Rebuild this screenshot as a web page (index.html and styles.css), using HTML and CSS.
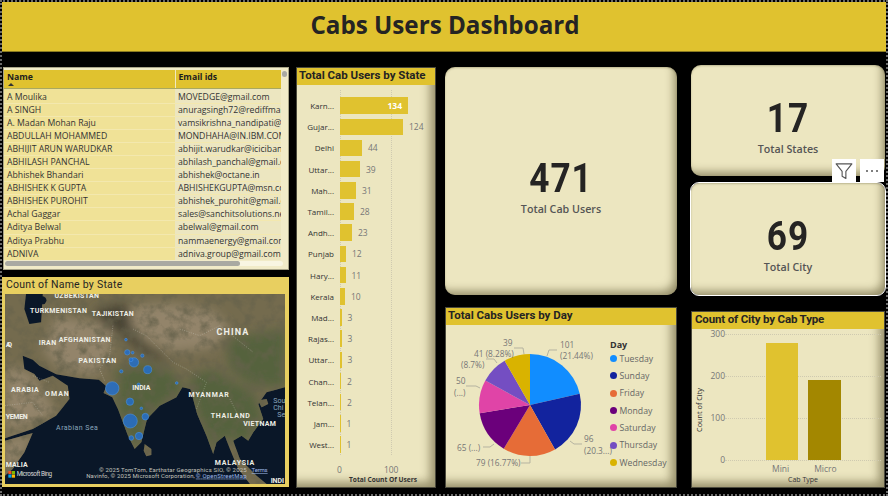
FILE: index.html
```html
<!DOCTYPE html>
<html lang="en">
<head>
<meta charset="utf-8">
<title>Cabs Users Dashboard</title>
<link rel="stylesheet" href="styles.css">
</head>
<body>
<div class="page">
  <header class="banner"><h1>Cabs Users Dashboard</h1></header>
  <main class="board">
    <section class="col col-one">
      <div class="table-card">
        <div class="table-clip">
          <table class="people">
            <thead><tr><th><span>Name</span><i class="sort"></i></th><th><span>Email ids</span></th></tr></thead>
            <tbody>
              <tr><td>A Moulika</td><td>MOVEDGE@gmail.com</td></tr>
              <tr><td>A SINGH</td><td>anuragsingh72@rediffmail.com</td></tr>
              <tr><td>A. Madan Mohan Raju</td><td>vamsikrishna_nandipati@yahoo.com</td></tr>
              <tr><td>ABDULLAH MOHAMMED</td><td>MONDHAHA@IN.IBM.COM</td></tr>
              <tr><td>ABHIJIT ARUN WARUDKAR</td><td>abhijit.warudkar@icicibank.com</td></tr>
              <tr><td>ABHILASH PANCHAL</td><td>abhilash_panchal@gmail.com</td></tr>
              <tr><td>Abhishek Bhandari</td><td>abhishek@octane.in</td></tr>
              <tr><td>ABHISHEK K GUPTA</td><td>ABHISHEKGUPTA@msn.com</td></tr>
              <tr><td>ABHISHEK PUROHIT</td><td>abhishek_purohit@gmail.com</td></tr>
              <tr><td>Achal Gaggar</td><td>sales@sanchitsolutions.net</td></tr>
              <tr><td>Aditya Belwal</td><td>abelwal@gmail.com</td></tr>
              <tr><td>Aditya Prabhu</td><td>nammaenergy@gmail.com</td></tr>
              <tr><td>ADNIVA</td><td>adniva.group@gmail.com</td></tr>
            </tbody>
          </table>
          <div class="vscroll"></div>
        </div>
        <div class="hscroll"><div class="hthumb"></div></div>
      </div>
      <div class="map-card">
        <h2 class="map-title">Count of Name by State</h2>
        <svg class="map" viewBox="17 65 838 570" preserveAspectRatio="none" role="img" aria-label="Bubble map of India">
          <defs>
            <filter id="softer" x="-30%" y="-30%" width="160%" height="160%"><feGaussianBlur stdDeviation="16"/></filter>
            <filter id="grain" x="0" y="0" width="100%" height="100%">
              <feTurbulence type="fractalNoise" baseFrequency="0.03" numOctaves="5" seed="7"/>
              <feColorMatrix type="matrix" values="0 0 0 0 .13  0 0 0 0 .12  0 0 0 0 .07  2 0 0 0 -.85"/>
            </filter>
            <clipPath id="landclip">
              <path d="M17 65H855V345L800 360 775 395 790 440 760 480 745 505 725 490 700 505 720 560 770 610 800 635H750L715 590 690 530 675 490 650 510 640 545 620 490 592 425 572 350 548 345 530 375 480 400 442 440 425 510 405 530 385 490 355 410 338 375 312 362 320 342 298 322 240 318 170 306 120 280 100 262 70 250 75 290 105 305 120 325 160 310 205 340 210 380 170 430 100 470 17 498Z"/>
              <path d="M17 505 100 482 75 540 40 590 17 610Z"/>
              <path d="M435 515 455 530 455 548 440 552 432 535Z"/>
              <path d="M775 385 800 380 805 395 785 405Z"/>
            </clipPath>
          </defs>
          <rect x="17" y="65" width="838" height="570" class="sea"/>
          <g clip-path="url(#landclip)">
            <rect x="17" y="65" width="838" height="570" class="land"/>
            <g filter="url(#softer)">
              <path class="land-green" d="M340 300 420 270 520 300 550 345 530 375 480 400 442 440 425 510 405 530 385 490 355 410 345 375 365 340Z"/>
              <path class="land-green" d="M570 310 640 290 700 330 760 360 790 440 745 505 700 505 675 490 640 545 620 490 592 425 572 350Z"/>
              <path class="land-green" d="M680 200 855 170 855 345 760 340 690 290Z"/>
              <path class="land-pale" d="M400 100 520 95 640 115 690 170 640 225 520 240 440 200 385 160Z"/>
              <path class="land-pale" d="M170 130 340 160 330 250 290 310 180 290 130 230Z"/>
              <path class="land-pale" d="M17 280 90 300 120 340 170 420 90 460 17 470Z"/>
              <path class="land-pale" d="M17 505 100 482 75 540 40 590 17 610Z"/>
              <path class="land-dark" d="M285 110 380 90 400 170 440 220 520 270 440 255 370 190 310 160Z"/>
            </g>
            <rect x="17" y="65" width="838" height="570" filter="url(#grain)"/>
          </g>
          <path class="sea" d="M80 65H130L125 150 90 155 75 110Z"/>
          <ellipse class="sea" cx="128" cy="84" rx="13" ry="12"/>
          <path class="borders" d="M340 160 330 250 300 290 315 325M400 170 440 190 520 270 560 290M560 290 620 330 590 410M540 170 600 190 660 160 760 240M690 380 720 440M100 310 150 330M17 400 100 390 130 430"/>
          <g class="bubbles">
            <circle cx="338" cy="348" r="20"/><circle cx="392" cy="446" r="21"/><circle cx="403" cy="270" r="14"/>
            <circle cx="444" cy="292" r="12"/><circle cx="391" cy="388" r="11"/><circle cx="437" cy="433" r="10"/>
            <circle cx="418" cy="491" r="11"/><circle cx="395" cy="497" r="7"/><circle cx="383" cy="240" r="8"/>
            <circle cx="394" cy="262" r="6"/><circle cx="399" cy="241" r="4"/><circle cx="428" cy="250" r="5"/>
            <circle cx="379" cy="202" r="4"/><circle cx="365" cy="297" r="5"/><circle cx="417" cy="337" r="5"/>
            <circle cx="425" cy="408" r="4"/><circle cx="531" cy="332" r="4"/>
          </g>
          <g class="map-labels">
            <text x="165" y="77" textLength="133">UZBEKISTAN</text>
            <text x="92" y="122" textLength="170">TURKMENISTAN</text>
            <text x="277" y="130" textLength="125">TAJIKISTAN</text>
            <text class="big" x="650" y="188" textLength="95">CHINA</text>
            <text x="118" y="217" textLength="52">IRAN</text>
            <text x="178" y="210" textLength="155">AFGHANISTAN</text>
            <text x="237" y="271" textLength="113">PAKISTAN</text>
            <text x="398" y="352" textLength="54">INDIA</text>
            <text x="35" y="358" textLength="83">ARABIA</text>
            <text x="137" y="371" textLength="71">OMAN</text>
            <text x="566" y="373" textLength="121">MYANMAR</text>
            <text x="633" y="436" textLength="117">THAILAND</text>
            <text x="730" y="461" textLength="98">VIETNAM</text>
            <text x="19" y="439" textLength="66">YEMEN</text>
            <text x="645" y="578" textLength="118">MALAYSIA</text>
            <text x="19" y="585" textLength="66">MALIA</text>
            <text x="19" y="224" textLength="19">AQ</text>
            <text x="812" y="632" textLength="40">INDI</text>
            <text class="water" x="170" y="472" textLength="125">Arabian Sea</text>
            <text class="water" x="820" y="392">Sou</text>
            <text class="water" x="820" y="413">Chi</text>
            <text class="water" x="832" y="434">Se</text>
          </g>
          <g>
            <rect x="27" y="596" width="9.500" height="9.500" fill="#f25022"/><rect x="37.500" y="596" width="9.500" height="9.500" fill="#7fba00"/>
            <rect x="27" y="606.500" width="9.500" height="9.500" fill="#00a4ef"/><rect x="37.500" y="606.500" width="9.500" height="9.500" fill="#ffb900"/>
            <text class="bing" x="52" y="611" textLength="106">Microsoft Bing</text>
          </g>
          <text class="credit" x="298" y="599" textLength="442">© 2025 TomTom, Earthstar Geographics SIO, © 2025</text>
          <text class="credit link" x="755" y="599" textLength="48">Terms</text>
          <text class="credit" x="260" y="616" textLength="325">Navinfo, © 2025 Microsoft Corporation,</text>
          <text class="credit link" x="588" y="616" textLength="152">© OpenStreetMap</text>
        </svg>
      </div>
    </section>

    <section class="col col-two">
      <div class="panel state-panel">
        <h2 class="panel-title">Total Cab Users by State</h2>
        <div class="hbars">
          <i class="gridline grid-zero"></i><i class="gridline grid-hundred"></i>
          <div class="hrow"><span class="hlabel">Karn...</span><span class="hbar" style="width:68px"><b class="inside">134</b></span></div>
          <div class="hrow"><span class="hlabel">Gujar...</span><span class="hbar" style="width:63px"></span><em>124</em></div>
          <div class="hrow"><span class="hlabel">Delhi</span><span class="hbar" style="width:22px"></span><em>44</em></div>
          <div class="hrow"><span class="hlabel">Uttar...</span><span class="hbar" style="width:20px"></span><em>39</em></div>
          <div class="hrow"><span class="hlabel">Mah...</span><span class="hbar" style="width:16px"></span><em>31</em></div>
          <div class="hrow"><span class="hlabel">Tamil...</span><span class="hbar" style="width:14px"></span><em>28</em></div>
          <div class="hrow"><span class="hlabel">Andh...</span><span class="hbar" style="width:12px"></span><em>23</em></div>
          <div class="hrow"><span class="hlabel">Punjab</span><span class="hbar" style="width:6px"></span><em>12</em></div>
          <div class="hrow"><span class="hlabel">Hary...</span><span class="hbar" style="width:5.500px"></span><em>11</em></div>
          <div class="hrow"><span class="hlabel">Kerala</span><span class="hbar" style="width:5px"></span><em>10</em></div>
          <div class="hrow"><span class="hlabel">Mad...</span><span class="hbar" style="width:1.500px"></span><em>3</em></div>
          <div class="hrow"><span class="hlabel">Rajas...</span><span class="hbar" style="width:1.500px"></span><em>3</em></div>
          <div class="hrow"><span class="hlabel">Uttar...</span><span class="hbar" style="width:1.500px"></span><em>3</em></div>
          <div class="hrow"><span class="hlabel">Chan...</span><span class="hbar" style="width:1px"></span><em>2</em></div>
          <div class="hrow"><span class="hlabel">Telan...</span><span class="hbar" style="width:1px"></span><em>2</em></div>
          <div class="hrow"><span class="hlabel">Jam...</span><span class="hbar" style="width:.5px"></span><em>1</em></div>
          <div class="hrow"><span class="hlabel">West...</span><span class="hbar" style="width:.5px"></span><em>1</em></div>
        </div>
        <div class="haxis"><span>0</span><span>100</span></div>
        <div class="haxis-title">Total Count Of Users</div>
      </div>
    </section>

    <section class="col col-three">
      <div class="kpi kpi-main"><strong>471</strong><span>Total Cab Users</span></div>
      <div class="panel pie-panel">
        <h2 class="panel-title">Total Cabs Users by Day</h2>
        <div class="pie-body">
          <svg class="pie" viewBox="445 324 163 164" role="img" aria-label="Pie chart of cab users by day">
            <g transform="translate(529 404)">
              <path fill="#118dff" d="M0 0V-51A51 51 0 0 1 49.730-11.300Z"/>
              <path fill="#12239e" d="M0 0 49.730-11.300A51 51 0 0 1 25.070 44.410Z"/>
              <path fill="#e66c37" d="M0 0 25.070 44.410A51 51 0 0 1-26.230 43.730Z"/>
              <path fill="#6b007b" d="M0 0-26.230 43.730A51 51 0 0 1-50.320 8.290Z"/>
              <path fill="#e044a7" d="M0 0-50.320 8.290A51 51 0 0 1-44.670-24.610Z"/>
              <path fill="#744ec2" d="M0 0-44.670-24.610A51 51 0 0 1-25.350-44.250Z"/>
              <path fill="#d9b300" d="M0 0-25.350-44.250A51 51 0 0 1 0-51Z"/>
            </g>
            <g class="leaders">
              <polyline points="546,355 548,349 556,349"/><polyline points="569,440 573,443 581,443"/>
              <polyline points="529,455 529,462 520,462"/><polyline points="493,443 489,446 482,446"/>
              <polyline points="479,387 475,385 465,385"/><polyline points="496,362 493,358 485,358"/>
              <polyline points="523,353 522,347 513,347"/>
            </g>
            <g class="pie-labels">
              <text x="559" y="347">101</text><text x="559" y="358">(21.44%)</text>
              <text x="583" y="441">96</text><text x="583" y="453">(20.3...)</text>
              <text x="475" y="465">79 (16.77%)</text>
              <text x="456" y="450">65 (...)</text>
              <text x="455" y="383">50</text><text x="453" y="395">(...)</text>
              <text x="473" y="356">41 (8.28%)</text><text x="460" y="367">(8.7%)</text>
              <text x="502" y="345">39</text>
            </g>
          </svg>
          <div class="legend">
            <div class="legend-title">Day</div>
            <div class="legend-item"><i class="dot c1"></i>Tuesday</div>
            <div class="legend-item"><i class="dot c2"></i>Sunday</div>
            <div class="legend-item"><i class="dot c3"></i>Friday</div>
            <div class="legend-item"><i class="dot c4"></i>Monday</div>
            <div class="legend-item"><i class="dot c5"></i>Saturday</div>
            <div class="legend-item"><i class="dot c6"></i>Thursday</div>
            <div class="legend-item"><i class="dot c7"></i>Wednesday</div>
          </div>
        </div>
      </div>
    </section>

    <section class="col col-four">
      <div class="kpi kpi-small"><strong>17</strong><span>Total States</span></div>
      <div class="kpi kpi-small kpi-focus"><strong>69</strong><span>Total City</span></div>
      <div class="tools">
        <div class="tool">
          <svg viewBox="0 0 24 24" width="18" height="18"><path class="funnel" d="M1.500 2.500H22.500L14.500 12.500V22L9.500 19V12.500Z"/></svg>
        </div>
        <div class="tool"><i></i><i></i><i></i></div>
      </div>
      <div class="panel cab-panel">
        <h2 class="panel-title">Count of City by Cab Type</h2>
        <div class="vchart">
          <div class="ytitle"><span>Count of City</span></div>
          <div class="yticks"><span>300</span><span>200</span><span>100</span><span>0</span></div>
          <div class="plot">
            <i class="hline l300"></i><i class="hline l200"></i><i class="hline l100"></i><i class="hline l0"></i>
            <div class="vbar mini"></div>
            <div class="vbar micro"></div>
          </div>
        </div>
        <div class="xticks"><span>Mini</span><span>Micro</span></div>
        <div class="xtitle">Cab Type</div>
      </div>
    </section>
  </main>
</div>
</body>
</html>
```

FILE: styles.css
```css
* { box-sizing: border-box; }
html, body { margin: 0; padding: 0; background: #000; }
.page {
  width: 888px; height: 496px; overflow: hidden; background: #000;
  border: 2px dotted #6a6a6a;
  font-family: "Open Sans", "Noto Sans", sans-serif;
}
.banner {
  height: 50px; background: #e0c22f; border-bottom: 1px solid #8a7a20;
  display: flex; align-items: center; justify-content: center;
  margin-right: -2px;
}
.banner h1 { margin: 0 0 4px; font: 700 24.200px "Open Sans", sans-serif; color: #252423; }
.board { display: flex; align-items: flex-start; padding-top: 13px; }
.col { display: flex; flex-direction: column; }
.col-one { width: 286px; margin-left: 1px; padding-top: 2px; gap: 7px; }
.col-two { width: 140px; margin-left: 7px; padding-top: 2px; }
.col-three { width: 232px; margin-left: 9px; padding-top: 2px; gap: 12px; }
.col-four { width: 194px; margin-left: 14px; position: relative; }

/* table */
.table-card {
  height: 203px; background: #f1ebc8; border: 1px solid #a8a488;
  padding: 2px 1px 0 0; display: flex; flex-direction: column;
}
.table-clip { position: relative; height: 190px; width: 283px; padding-right: 5px; overflow: hidden; }
.people { border-collapse: collapse; table-layout: fixed; width: 277px; font-size: 8.700px; color: #333; }
.people th {
  height: 18px; background: #e0c22f; color: #1d1d1d; font-size: 8.700px; font-weight: 700;
  text-align: left; vertical-align: top; padding: 1px 0 0 3px; border-right: 1px solid #f0e9c0;
  border-bottom: 1px solid #a9a860; position: relative; line-height: 12px;
}
.people th:first-child { width: 171px; }
.people th:last-child { border-right: 0; }
.sort {
  position: absolute; left: 4px; top: 13px; width: 0; height: 0;
  border: 3px solid transparent; border-top: 0; border-bottom: 3px solid #333;
}
.people td {
  height: 13.100px; padding: 0 0 0 3px; white-space: nowrap; overflow: hidden;
  line-height: 12px; border-bottom: 1px solid #f3e8ae;
}
.people tbody tr:first-child td { height: 15.100px; padding-top: 2px; }
.people td:first-child { background: #f0e297; }
.people td:last-child { background: #ece6c0; }
.vscroll { position: absolute; right: 0; top: 1px; width: 5px; height: 6px; background: #a9a9a2; border-radius: 3px; }
.hscroll { height: 5px; width: 278px; margin: 1px 0 0 1px; background: #f8f5e2; border-radius: 3px; }
.hthumb { height: 5px; width: 235px; background: #a9a9a2; border-radius: 3px; }

/* map */
.map-card {
  height: 210px; background: #e8cf60; padding: 0 3px 3px 3px; margin-left: -1px;
  display: flex; flex-direction: column;
}
.map-title { margin: 0; height: 17px; font: 400 10.500px/15px "Roboto", sans-serif; letter-spacing: .25px; color: #252423; padding-left: 1px; }
.map { width: 280px; height: 190px; display: block; }
.sea { fill: #0a1728; }
.land { fill: #746b4e; }
.land-green { fill: #55623c; }
.land-pale { fill: #93846a; }
.land-dark { fill: #4a4534; }
.borders { fill: none; stroke: #cfcfc4; stroke-width: 2; stroke-dasharray: 3 4; opacity: .55; }
.bubbles circle { fill: #1f6fd2; fill-opacity: .8; stroke: #4d98e8; stroke-width: 1.500; }
.map-labels text { font: 700 21px "Roboto", sans-serif; fill: #eeeee6; }
.map-labels .big { font-size: 27px; }
.map-labels .water { fill: #8ba7bd; font-weight: 400; }
.bing { font: 400 19px "Roboto", sans-serif; fill: #d8d8d8; }
.credit { font: 400 18px "Roboto", sans-serif; fill: #c4c4bc; }
.credit.link { fill: #9db8e8; text-decoration: underline; }

/* shared panels */
.panel {
  background: #ece6c0; border: 1px solid #4b4a3d; display: flex; flex-direction: column; position: relative;
  box-shadow: inset -8px -8px 10px -3px rgba(70, 62, 25, .5);
}
.panel-title {
  margin: 0; height: 17px; background: #e0c22f; color: #252423; flex: none;
  font: 700 11.500px/15px "Roboto", sans-serif; padding-left: 2px;
}
.cab-panel .panel-title { padding-left: 3px; letter-spacing: -.16px; }

/* state bars */
.state-panel { height: 421px; }
.hbars { position: relative; padding-top: 10px; height: 372px; display: flex; flex-direction: column; }
.hrow { height: 21.190px; display: flex; align-items: center; flex: none; position: relative; }
.hlabel { width: 37px; margin-right: 6px; text-align: right; font-size: 8px; color: #333; white-space: nowrap; flex: none; }
.hbar { height: 16.500px; background: #e0c22f; display: flex; align-items: center; justify-content: flex-end; flex: none; }
.hrow em { font: normal 8.500px "Open Sans", sans-serif; color: #777; margin-left: 6px; }
.inside { font: 700 8.500px "Open Sans", sans-serif; color: #fff; padding-right: 6px; }
.gridline { position: absolute; top: 5px; bottom: 2px; width: 0; border-left: 1px dotted #cfcab0; }
.grid-zero { left: 43px; }
.grid-hundred { left: 94px; }
.haxis { position: relative; height: 13px; font-size: 8.500px; line-height: 14px; color: #777; margin-top: 6px; display: flex; padding-left: 40px; gap: 42px; }
.haxis-title { font: 700 6.600px "Open Sans", sans-serif; color: #333; padding-left: 52px; line-height: 8px; }

/* KPI cards */
.kpi {
  background: #ece6c0; border-radius: 10px; display: flex; flex-direction: column; align-items: center; justify-content: center;
  box-shadow: inset -6px -7px 9px -3px rgba(70, 62, 25, .5), inset 0 1px 2px rgba(70, 62, 25, .3);
  color: #252423;
}
.kpi strong { font: 700 40px/40px "Roboto", sans-serif; letter-spacing: 1px; transform: scaleX(.88); }
.kpi span { font: 600 10.700px/14px "Open Sans", sans-serif; color: #555; margin-top: 3px; }
.kpi-main { height: 228px; padding-top: 12px; }
.kpi-small { height: 111px; padding-top: 13px; }
.kpi-small + .kpi-small { height: 112px; margin-top: 7px; border-radius: 8px; padding-top: 13px; }
.kpi-focus { outline: 1px solid #fff; outline-offset: 0; }
.tools { position: absolute; right: 1px; top: 94px; display: flex; gap: 4px; }
.tool { width: 24px; height: 23px; background: #fff; display: flex; align-items: center; justify-content: center; gap: 3px; }
.tool i { width: 2px; height: 2px; border-radius: 50%; background: #555; display: block; }
.funnel { fill: #fff; stroke: #555; stroke-width: 1.500; stroke-linejoin: round; }

/* pie */
.pie-panel { height: 181px; }
.pie-body { display: flex; height: 164px; }
.pie { width: 163px; height: 164px; display: block; flex: none; overflow: visible; }
.leaders polyline { fill: none; stroke: #b5b3a0; stroke-width: 1; }
.pie-labels text { font: 400 8.300px "Open Sans", sans-serif; fill: #777; }
.legend { padding: 13px 0 0 1px; }
.legend-title { font: 700 9px/14px "Open Sans", sans-serif; color: #333; height: 11px; margin-bottom: 1px; }
.legend-item { height: 17.330px; display: flex; align-items: center; gap: 2.500px; font-size: 8.700px; color: #666; white-space: nowrap; }
.dot { width: 7px; height: 7px; border-radius: 50%; display: block; flex: none; }
.c1 { background: #118dff; } .c2 { background: #12239e; } .c3 { background: #e66c37; } .c4 { background: #6b007b; }
.c5 { background: #e044a7; } .c6 { background: #744ec2; } .c7 { background: #d9b300; }

/* cab chart */
.cab-panel { height: 177px; margin-top: 16px; }
.vchart { display: flex; height: 138px; }
.ytitle { width: 13px; display: flex; align-items: center; justify-content: center; padding-top: 24px; }
.ytitle span { transform: rotate(-90deg); white-space: nowrap; font: 400 7.300px "Open Sans", sans-serif; color: #333; }
.yticks { width: 20px; display: flex; flex-direction: column; justify-content: space-between; align-items: flex-end; height: 138px; font-size: 8.500px; color: #777; line-height: 12px; margin-top: -1px; }
.plot { position: relative; width: 156px; height: 126px; margin-top: 5px; display: flex; align-items: flex-end; padding-left: 41px; gap: 10px; }
.hline { position: absolute; left: 0; right: 0; border-top: 1px dotted #cfcab0; height: 0; }
.l300 { top: 0; } .l200 { top: 42px; } .l100 { top: 84px; } .l0 { top: 126px; }
.vbar { position: relative; width: 32px; }
.mini { height: 117px; background: #e0c22f; }
.micro { height: 80px; background: #a38700; width: 33px; }
.xticks { display: flex; padding-left: 80px; gap: 25px; font-size: 8.500px; color: #777; line-height: 12px; margin-top: -4px; }
.xtitle { font: 400 7px/10px "Open Sans", sans-serif; color: #333; padding-left: 96px; margin-top: 0; }
```
